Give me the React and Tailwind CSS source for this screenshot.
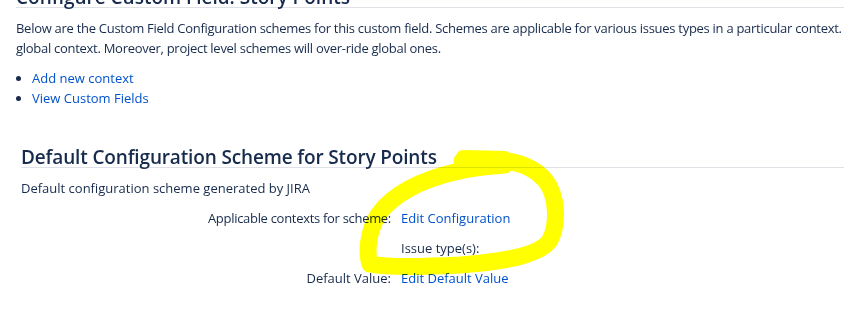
export default function App() {
  return (
    <div className="relative h-[316px] w-[844px] overflow-hidden bg-white pl-4 text-[13px] leading-[20px] text-[#172b4d] font-['Open_Sans',sans-serif]">
      {/* Page heading, scrolled mostly out of view */}
      <h2 className="-mt-[13px] border-b border-[#dfe1e6] text-[19px] leading-[20px] font-semibold">
        Configure Custom Field: Story Points
      </h2>

      <p className="mt-[10px] whitespace-nowrap tracking-[-0.28px]">
        Below are the Custom Field Configuration schemes for this custom field. Schemes are applicable for various issues types in a particular context. You can also specify a
        <br />
        global context. Moreover, project level schemes will over-ride global ones.
      </p>

      <ul className="mt-[10px] list-disc pl-4 marker:text-[#172b4d]">
        <li>
          <a href="#" className="text-[#0052cc]">Add new context</a>
        </li>
        <li>
          <a href="#" className="text-[#0052cc]">View Custom Fields</a>
        </li>
      </ul>

      {/* Default scheme */}
      <div className="mt-[39px] ml-[5px]">
        <h2 className="border-b border-[#dfe1e6] text-[19px] leading-[20px] font-semibold tracking-[-0.15px]">
          Default Configuration Scheme for Story Points
        </h2>
        <p className="mt-[10px]">Default configuration scheme generated by JIRA</p>

        <div className="mt-[5px] grid grid-cols-[370px_1fr] gap-x-[10px]">
          <div className="py-[5px] text-right tracking-[-0.3px]">Applicable contexts for scheme:</div>
          <div className="py-[5px]">
            <a href="#" className="text-[#0052cc]">Edit Configuration</a>
          </div>
          <div className="py-[5px]"></div>
          <div className="py-[5px]">Issue type(s):</div>
          <div className="py-[5px] text-right">Default Value:</div>
          <div className="py-[5px]">
            <a href="#" className="text-[#0052cc]">Edit Default Value</a>
          </div>
        </div>
      </div>

      {/* yellow marker scribble */}
      <svg className="pointer-events-none absolute left-0 top-0 mix-blend-multiply" width="844" height="316" viewBox="0 0 844 316">
        <g fill="none" stroke="#ffff00" strokeLinecap="round" strokeLinejoin="round">
          <path
            strokeWidth="17"
            d="M 462 161 C 500 156, 530 162, 545 180 C 558 196, 558 225, 550 240 C 540 256, 500 262, 460 265 C 420 267, 385 267, 370 264 C 366 252, 368 232, 378 215 C 392 195, 420 180, 455 172 C 470 168, 490 166, 505 165"
          />
          <path strokeWidth="14" d="M 463 157 L 505 158" />
          <path strokeWidth="10" d="M 369 250 L 369 266 L 380 267" />
        </g>
      </svg>
    </div>
  );
}
